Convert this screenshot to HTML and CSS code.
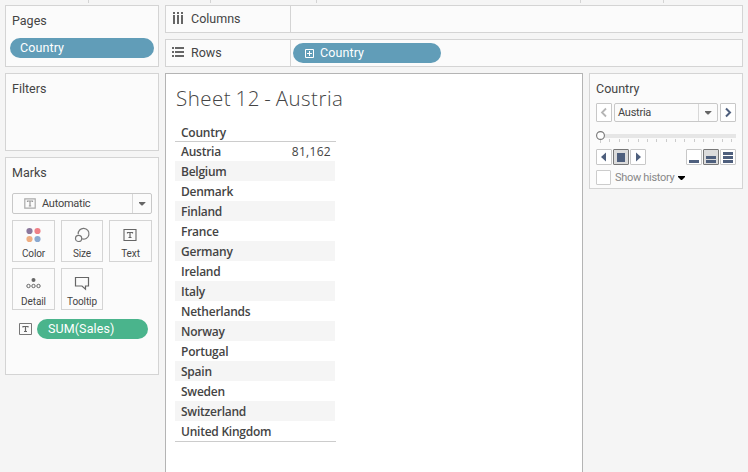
FILE: index.html
```
<!DOCTYPE html>
<html lang="en">
<head>
<meta charset="utf-8">
<title>Sheet 12 - Austria</title>
<link rel="stylesheet" href="styles.css">
</head>
<body>
<div class="toolbar"><i></i><i></i><i></i><i></i><i></i></div>
<div class="app">
  <aside class="side">
    <section class="panel pages"><h2>Pages</h2><div class="pill blue"><span>Country</span></div></section>
    <section class="panel filters"><h2>Filters</h2></section>
    <section class="panel marks">
      <h2>Marks</h2>
      <div class="select mark-type">
        <svg class="type-icon" width="12" height="11" viewBox="0 0 12 11"><path d="M.8.8h10.4v9.4H.8z" fill="none" stroke="#aaa" stroke-width="1.2"/><path d="M3.5 4V3h5v1M6 3v5M4.8 8h2.4" fill="none" stroke="#999" stroke-width="1.2"/></svg>
        <span class="value">Automatic</span><span class="drop"><b></b></span>
      </div>
      <div class="cards">
        <div class="card"><svg width="16" height="16" viewBox="0 0 16 16"><circle cx="3.500" cy="4" r="3.1" fill="#8c789d"/><circle cx="11.500" cy="4" r="3.1" fill="#ef8087"/><circle cx="3.500" cy="12" r="3.1" fill="#efae82"/><circle cx="11.500" cy="12" r="3.1" fill="#8ba9d0"/></svg><span>Color</span></div>
        <div class="card"><svg width="16" height="16" viewBox="0 0 16 16"><g fill="none" stroke="#777" stroke-width="1.2"><path d="M4.2 7.3A5.4 5.4 0 1 1 7.7 11.8"/><circle cx="4.6" cy="11.4" r="3.1"/></g></svg><span>Size</span></div>
        <div class="card"><svg width="16" height="16" viewBox="0 0 16 16"><path d="M1 2.5h12v11H1z" fill="none" stroke="#666" stroke-width="1.1"/><path d="M4.5 6.5v-1h5v1M7 5.5v5M5.500 10.5h3" fill="none" stroke="#666" stroke-width="1.2"/></svg><span>Text</span></div>
        <div class="card"><svg width="16" height="16" viewBox="0 0 16 16"><circle cx="7.500" cy="5" r="2" fill="#666"/><g fill="none" stroke="#666"><circle cx="2.500" cy="11" r="1.7"/><circle cx="7.500" cy="11" r="1.7"/><circle cx="12.500" cy="11" r="1.7"/></g></svg><span>Detail</span></div>
        <div class="card"><svg width="16" height="16" viewBox="0 0 16 16"><path d="M1.5 2.5h13v8.5h-3v3.2L8 11H1.5z" fill="none" stroke="#666" stroke-width="1.2"/></svg><span>Tooltip</span></div>
      </div>
      <div class="encoding">
        <svg width="13" height="12" viewBox="0 0 13 12"><path d="M.5.5h12v11H.5z" fill="none" stroke="#777"/><path d="M4 4.5v-1h5v1M6.5 3.5v5M5 8.5h3" fill="none" stroke="#666" stroke-width="1.2"/></svg>
        <div class="pill green"><span>SUM(Sales)</span></div>
      </div>
    </section>
  </aside>
  <div class="main">
    <section class="panel shelf">
      <div class="shelf-name"><svg width="13" height="14" viewBox="0 0 13 14"><path d="M2 0v2M6 0v2M10 0v2M2 3v9M6 3v9M10 3v9" stroke="#666" stroke-width="2"/></svg><span>Columns</span></div>
    </section>
    <section class="panel shelf">
      <div class="shelf-name"><svg width="13" height="14" viewBox="0 0 13 14"><path d="M0 2h2M0 6h2M0 10h2M3 2h9M3 6h9M3 10h9" stroke="#666" stroke-width="2"/></svg><span>Rows</span></div>
      <div class="pill blue"><svg width="9" height="9" viewBox="0 0 9 9"><path d="M.5.5h8v8h-8zM2 4.500h5M4.500 2v5" fill="none" stroke="#fff"/></svg><span>Country</span></div>
    </section>
    <div class="work">
      <section class="sheet">
        <h1>Sheet 12 - Austria</h1>
        <div class="table">
          <div class="row head"><span>Country</span></div>
          <div class="row"><span>Austria</span><span class="num">81,162</span></div>
          <div class="row"><span>Belgium</span></div>
          <div class="row"><span>Denmark</span></div>
          <div class="row"><span>Finland</span></div>
          <div class="row"><span>France</span></div>
          <div class="row"><span>Germany</span></div>
          <div class="row"><span>Ireland</span></div>
          <div class="row"><span>Italy</span></div>
          <div class="row"><span>Netherlands</span></div>
          <div class="row"><span>Norway</span></div>
          <div class="row"><span>Portugal</span></div>
          <div class="row"><span>Spain</span></div>
          <div class="row"><span>Sweden</span></div>
          <div class="row"><span>Switzerland</span></div>
          <div class="row"><span>United Kingdom</span></div>
          <div class="rule"></div>
        </div>
      </section>
      <section class="panel player">
        <h2>Country</h2>
        <div class="picker">
          <div class="btn"><svg width="14" height="17" viewBox="0 0 14 17"><path d="M9 4.500l-4 4 4 4" fill="none" stroke="#b5b5b5" stroke-width="1.800"/></svg></div>
          <div class="select page"><span class="value">Austria</span><span class="drop"><b></b></span></div>
          <div class="btn"><svg width="14" height="17" viewBox="0 0 14 17"><path d="M5 4.500l4 4-4 4" fill="none" stroke="#4e5f7d" stroke-width="2"/></svg></div>
        </div>
        <svg class="slider" width="141" height="13" viewBox="0 0 141 13"><path d="M5 3h135v4H5z" fill="#e6e6e6"/><path d="M4.500 9v3M13.500 8v3M23.500 8v3M32.500 8v3M42.500 8v3M51.500 8v3M60.500 8v3M70.500 8v3M79.500 8v3M88.500 8v3M98.500 8v3M107.500 8v3M117.500 8v3M126.500 8v3M135.500 8v3" stroke="#ccc"/><circle cx="4.500" cy="4.500" r="3.900" fill="#fff" stroke="#777" stroke-width="1.100"/></svg>
        <div class="controls">
          <div class="btn"><svg width="14" height="14" viewBox="0 0 14 14"><path d="M9 2.500v9L4 7z" fill="#4e5f7d"/></svg></div>
          <div class="btn on"><svg width="14" height="14" viewBox="0 0 14 14"><path d="M3 3h8v9H3z" fill="#4e5f7d"/></svg></div>
          <div class="btn"><svg width="14" height="14" viewBox="0 0 14 14"><path d="M5 2.500v9L10 7z" fill="#4e5f7d"/></svg></div>
          <div class="btn speed"><svg width="14" height="14" viewBox="0 0 14 14"><path d="M2 10h10v3H2z" fill="#4e5f7d"/></svg></div>
          <div class="btn on"><svg width="14" height="14" viewBox="0 0 14 14"><path d="M2 6h10v3H2zM2 10h10v3H2z" fill="#4e5f7d"/></svg></div>
          <div class="btn"><svg width="14" height="14" viewBox="0 0 14 14"><path d="M2 2h10v3H2zM2 6h10v3H2zM2 10h10v3H2z" fill="#4e5f7d"/></svg></div>
        </div>
        <div class="history"><i class="check"></i><span>Show history</span><svg width="7" height="4" viewBox="0 0 7 4"><path d="M0 0h7v1L4 4H3L0 1z"/></svg></div>
      </section>
    </div>
  </div>
</div>
</body>
</html>
```
FILE: styles.css
```
* { box-sizing: border-box; }
body { margin: 0; width: 748px; height: 472px; overflow: hidden; background: #f5f5f5; color: #444; font: 12.5px/16px Roboto, sans-serif; }
h1, h2 { margin: 0; font-weight: 400; }
svg { display: block; flex: none; }
span { white-space: nowrap; }
.toolbar { display: grid; grid-template-columns: 122px 106px 264px 83px 1px; height: 5px; padding-left: 88px; }
.toolbar i { width: 1px; height: 3px; background: #d4d4d4; }
.app { display: flex; gap: 6px; padding-left: 5px; }
.side { width: 154px; display: flex; flex-direction: column; gap: 6px; }
.panel { border: 1px solid #d4d4d4; background: #fbfbfb; }
.panel h2 { font-size: 12.5px; line-height: 16px; padding: 7px 0 0 6px; }
.pages { height: 62px; }
.pages .pill { width: 144px; margin: 9px 0 0 4px; padding-left: 10px; }
.filters { height: 78px; }
.marks { height: 218px; }
.pill { height: 20px; border-radius: 10px; color: #fff; display: flex; align-items: center; letter-spacing: .1px; }
.blue { background: #619db8; }
.green { background: #4ab48c; }
.select { display: flex; align-items: center; border: 1px solid #c8c8c8; border-radius: 2px; font-size: 11px; letter-spacing: -.25px; }
.select .value { flex: 1; }
.drop { width: 19px; align-self: stretch; border-left: 1px solid #d8d8d8; display: flex; align-items: center; justify-content: center; }
.drop b { width: 7px; height: 4px; background: #666; clip-path: polygon(0 0, 100% 0, 100% 25%, 57% 100%, 43% 100%, 0 25%); }
.mark-type { width: 140px; height: 21px; margin: 12px 0 0 6px; padding-left: 11px; }
.type-icon { margin-right: 6px; }
.cards { display: grid; grid-template-columns: 43px 42px 43px; gap: 6px; margin: 6px 0 0 6px; }
.card { height: 42px; border: 1px solid #d4d4d4; display: flex; flex-direction: column; align-items: center; padding-top: 6px; font-size: 10px; line-height: 14px; letter-spacing: -.1px; }
.card span { margin-top: 4px; }
.encoding { display: flex; align-items: center; margin: 9px 0 0 13px; }
.encoding .pill { width: 111px; margin-left: 5px; padding-left: 11px; }
.main { width: 578px; display: flex; flex-direction: column; gap: 6px; }
.shelf { height: 28px; display: flex; align-items: center; }
.shelf-name { width: 125px; align-self: stretch; border-right: 1px solid #d4d4d4; display: flex; align-items: center; gap: 6px; padding-left: 6px; }
.shelf .pill { width: 148px; margin-left: 2px; padding-left: 12px; gap: 6px; }
.work { display: flex; gap: 6px; }
.sheet { width: 418px; height: 420px; border: 1px solid #b4b4b4; background: #fff; padding-left: 9px; font-family: "Open Sans", sans-serif; font-size: 12px; }
h1 { font-size: 20.5px; line-height: 26px; font-weight: 300; letter-spacing: .5px; word-spacing: -1.5px; padding: 11px 0 0 1px; }
.table { margin-top: 12px; width: 161px; font-weight: 600; letter-spacing: -.24px; }
.row { width: 160px; height: 20px; padding: 0 4px 0 6px; display: flex; justify-content: space-between; line-height: 22px; }
.row:nth-child(odd):not(.head) { background: #f5f5f5; }
.row.head { width: 161px; height: 19px; margin-bottom: -1px; border-bottom: 1px solid #ccc; line-height: 20px; }
.num { font-weight: 400; letter-spacing: .3px; }
.rule { height: 1px; background: #ccc; }
.player { width: 154px; height: 116px; }
.picker { display: flex; gap: 2px; margin: 6px 0 0 6px; }
.btn { width: 16px; height: 16px; border: 1px solid #c8c8c8; border-radius: 1px; background: #fff; }
.picker .btn, .page { height: 19px; }
.page { width: 104px; padding-left: 3px; }
.slider { margin: 9px 0 0 6px; }
.controls { display: flex; gap: 1px; margin: 5px 0 0 6px; }
.speed { margin-left: 39px; }
.on { background: #dcdcdc; border-color: #777; }
.history { display: flex; align-items: center; margin: 4px 0 0 6px; color: #888; font-size: 11px; letter-spacing: -.3px; }
.check { width: 15px; height: 15px; border: 1px solid #ccc; border-radius: 1px; background: #fff; margin-right: 4px; }
.history svg { margin-left: 4px; }
.history span { padding-top: 1px; }
```
